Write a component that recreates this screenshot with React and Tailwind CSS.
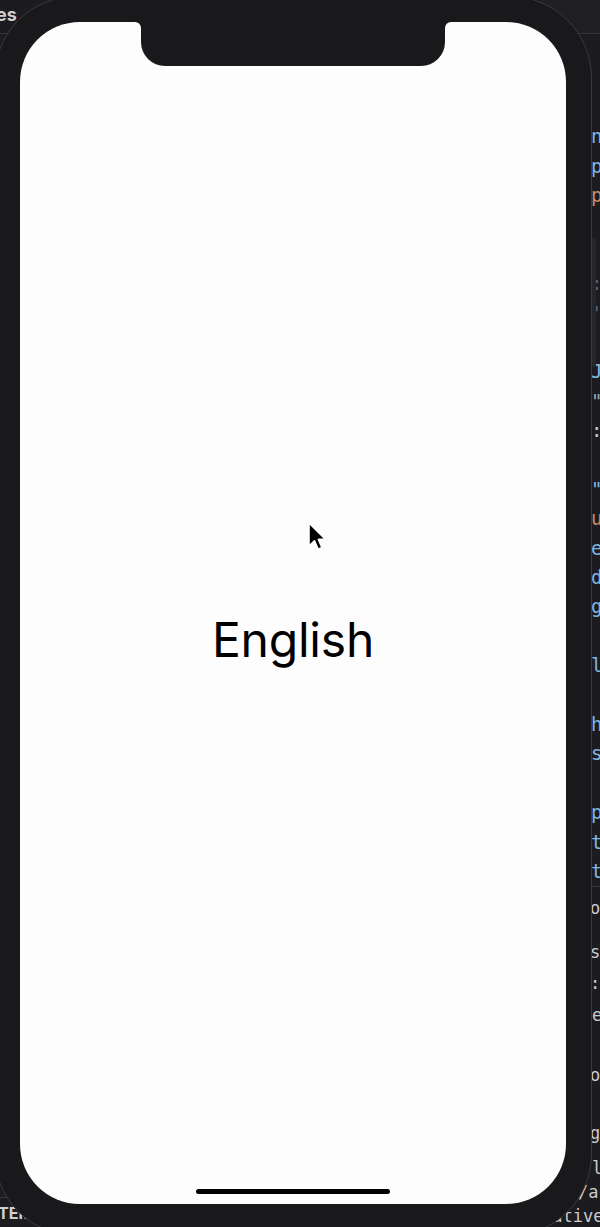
import React from "react";

const editorLines = [
  ["n", "text-[#7fb6e0]"],
  ["p", "text-[#7fb6e0]"],
  ["p", "text-[#c98a6a]"],
  ["", ""],
  ["", ""],
  [":", "text-[#4d6a80]"],
  ["'", "text-[#4d6a80]"],
  ["", ""],
  ["J", "text-[#7fb6e0]"],
  ["\"", "text-[#9aa8b4]"],
  [":", "text-[#c8c8c8]"],
  ["", ""],
  ["\"", "text-[#7fb6e0]"],
  ["u", "text-[#c98a6a]"],
  ["e", "text-[#7fb6e0]"],
  ["d", "text-[#7fb6e0]"],
  ["g", "text-[#7fb6e0]"],
  ["", ""],
  ["l", "text-[#7fb6e0]"],
  ["", ""],
  ["h", "text-[#7fb6e0]"],
  ["s", "text-[#7fb6e0]"],
  ["", ""],
  ["p", "text-[#7fb6e0]"],
  ["t", "text-[#7fb6e0]"],
  ["t", "text-[#7fb6e0]"],
];

export default function App() {
  return (
    <div
      className="relative w-[600px] h-[1227px] overflow-hidden bg-[#1c1b1f]"
      style={{ fontFamily: "Inter, 'Liberation Sans', sans-serif" }}
    >
      {/* background: editor window */}
      <div className="flex h-full">
        {/* left area */}
        <div className="w-[540px] flex flex-col justify-between">
          <div className="h-[34px] border-b border-[#343337] flex items-start">
            <span className="ml-[-4px] mt-[4px] text-[18px] font-bold text-[#cfcfd2] leading-[22px]">es</span>
          </div>
          <div className="h-[30px] border-t border-[#343337] flex items-center">
            <span className="ml-[-2px] text-[16px] font-bold text-[#cfcfd2] leading-[20px]">TEM</span>
          </div>
        </div>
        {/* right editor column */}
        <div
          className="relative w-[60px] flex flex-col overflow-hidden"
          style={{ fontFamily: "'DejaVu Sans Mono', 'Liberation Mono', monospace" }}
        >
          <div className="h-[34px] shrink-0 bg-[#201f23] border-b border-[#343337]" />
          <div className="h-[88px] shrink-0" />
          {editorLines.map(([t, c], i) => (
            <div key={i} className={`h-[29.4px] shrink-0 pl-[51px] flex items-center text-[19px] leading-none whitespace-nowrap ${c}`}>
              {t}
            </div>
          ))}
          <div className="flex-1 border-t border-[#38373b] flex flex-col text-[17px] text-[#cccccc] leading-none whitespace-nowrap">
            <div className="h-[21px] shrink-0" />
            <div className="h-[0px] shrink-0 pl-[50px] flex items-center">o</div>
            <div className="h-[44px] shrink-0" />
            <div className="h-[0px] shrink-0 pl-[50px] flex items-center">s</div>
            <div className="h-[31px] shrink-0" />
            <div className="h-[0px] shrink-0 pl-[50px] flex items-center">:</div>
            <div className="h-[32px] shrink-0" />
            <div className="h-[0px] shrink-0 pl-[52px] flex items-center">e</div>
            <div className="h-[60px] shrink-0" />
            <div className="h-[0px] shrink-0 pl-[50px] flex items-center">o</div>
            <div className="h-[58px] shrink-0" />
            <div className="h-[0px] shrink-0 pl-[50px] flex items-center">g</div>
            <div className="h-[35px] shrink-0" />
            <div className="h-[0px] shrink-0 pl-[52px] flex items-center">l</div>
            <div className="h-[24px] shrink-0" />
            <div className="h-[0px] shrink-0 pl-[38px] flex items-center">/ac</div>
            <div className="h-[24px] shrink-0" />
            <div className="h-[0px] shrink-0 pl-[2px] flex items-center">lative</div>
          </div>
          {/* faint widget edge overlaying the editor */}
          <div className="absolute left-[50px] top-[238px] w-[6px] h-[129px] bg-[#262529]" />
        </div>
      </div>

      {/* phone device (overlays the editor) */}
      <div className="absolute left-[-6px] top-[-4px] w-[598px] h-[1240px] rounded-[82px] bg-[#19181b] border border-[#3b3a3e] p-[25px]">
        <div className="relative w-[546px] h-[1182px] rounded-[60px] bg-[#fefdfe] overflow-hidden flex flex-col items-center">
          {/* notch */}
          <div className="absolute left-[121px] top-0 w-[304px] h-[44px] bg-[#19181b] rounded-b-[24px]" />
          <div className="absolute left-[115px] top-0 w-[6px] h-[6px] bg-[#19181b]">
            <div className="w-full h-full bg-[#fefdfe] rounded-tr-full" />
          </div>
          <div className="absolute left-[425px] top-0 w-[6px] h-[6px] bg-[#19181b]">
            <div className="w-full h-full bg-[#fefdfe] rounded-tl-full" />
          </div>

          <div className="pt-[594px] text-[48px] leading-[48px] text-black tracking-[-0.2px]">English</div>

          <div className="mt-auto mb-[10px] w-[194px] h-[5px] rounded-full bg-black" />
        </div>
      </div>

      {/* mouse cursor */}
      <svg
        className="absolute left-[306px] top-[521px]"
        width="24"
        height="32"
        viewBox="0 0 24 32"
      >
        <path
          d="M3 2 L3 25 L8.5 19.8 L12.2 28.2 L16 26.6 L12.4 18.4 L19.6 18.4 Z"
          fill="#000"
          stroke="#fff"
          strokeWidth="1.6"
          strokeLinejoin="round"
        />
      </svg>
    </div>
  );
}
